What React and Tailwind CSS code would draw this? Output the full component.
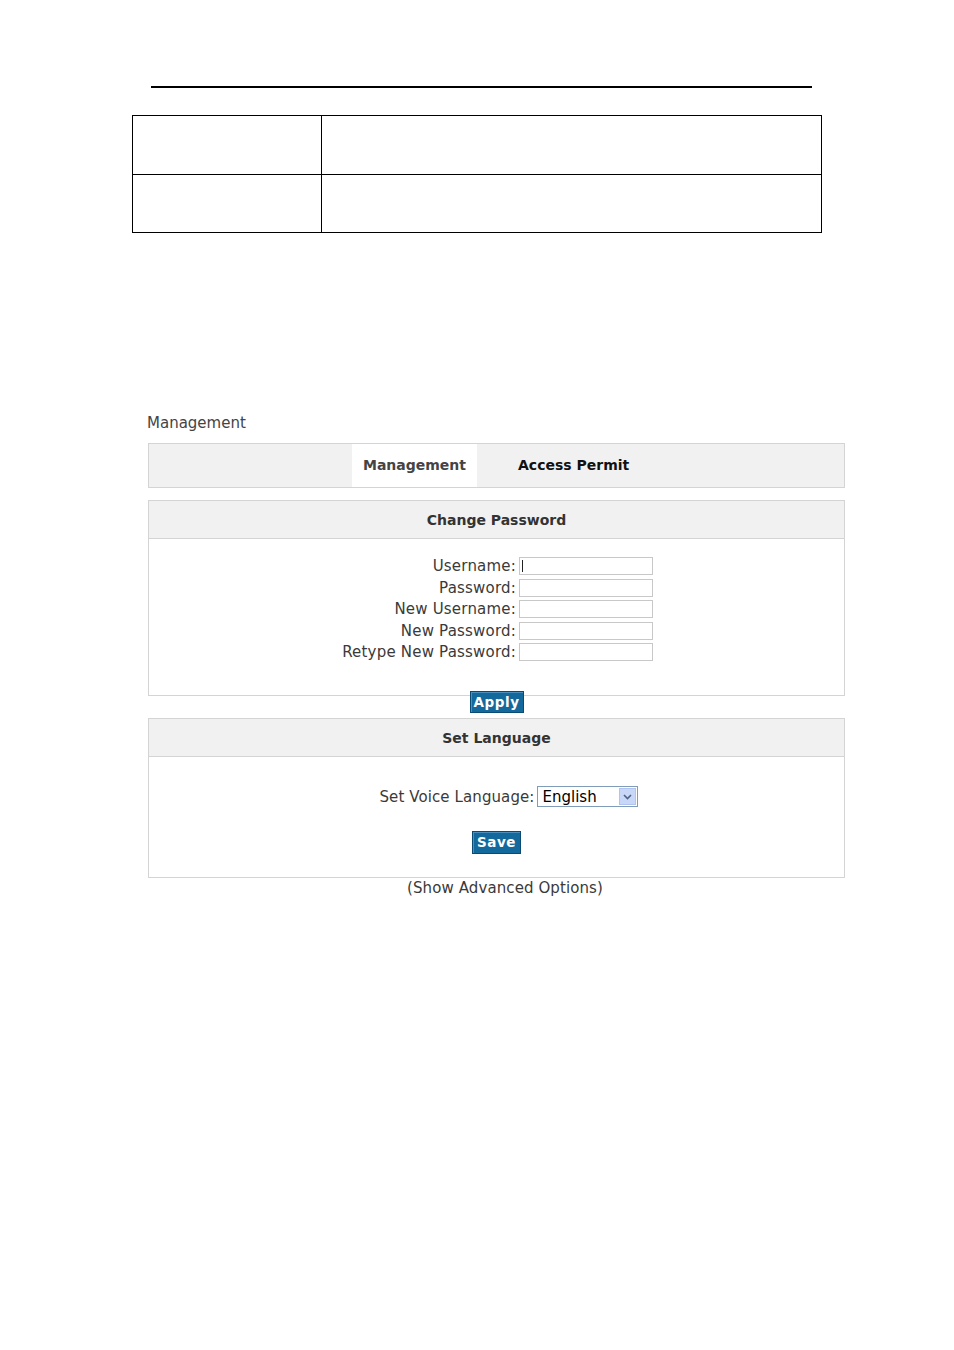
import React from "react";

const font = "font-['DejaVu_Sans',sans-serif]";

function Field({ label, cursor }) {
  return (
    <>
      <div className="text-right text-[15px] leading-[18px] tracking-[0.2px] text-[#3a3a3a] self-center">{label}</div>
      <div className="relative h-[18px] w-[134px] border border-[#c8c8c8] bg-white">
        {cursor && <div className="absolute left-[2px] top-[2px] h-[12px] w-[1px] bg-[#222]" />}
      </div>
    </>
  );
}

function BlueButton({ children, w, h }) {
  return (
    <div
      className={`mx-auto flex items-center justify-center border border-[#0b4a72] bg-[#13689c] text-[13.5px] font-bold tracking-[0.6px] text-white shadow-[inset_1px_1px_0_#4a8fbd] ${w} ${h}`}
    >
      {children}
    </div>
  );
}

export default function App() {
  return (
    <div className={`w-[954px] h-[1350px] bg-white ${font}`}>
      <div className="pt-[86px] pl-[151px]">
        <div className="h-[2px] w-[661px] bg-black" />
      </div>

      <div className="ml-[132px] mt-[27px] w-[690px] border border-black">
        <div className="flex h-[58px]">
          <div className="w-[188px]" />
          <div className="flex-1 border-l border-black" />
        </div>
        <div className="flex h-[58px] border-t border-black">
          <div className="w-[188px]" />
          <div className="flex-1 border-l border-black" />
        </div>
      </div>

      <div className="ml-[147px] mt-[181px] text-[15px] leading-[18px] text-[#444]">Management</div>

      <div className="ml-[148px] w-[697px]">
        <div className="mt-[11px] flex h-[45px] border border-[#d4d4d4] bg-[#f1f1f1] pl-[203px]">
          <div className="flex w-[125px] items-center justify-center bg-white text-[14px] font-bold text-[#444]">
            Management
          </div>
          <div className="ml-[41px] flex items-center text-[14px] font-bold text-[#111]">Access Permit</div>
        </div>

        <div className="mt-[12px] border border-[#d4d4d4]">
          <div className="flex h-[38px] items-center justify-center border-b border-[#d4d4d4] bg-[#f1f1f1] pt-[2px] text-[14px] font-bold text-[#333]">
            Change Password
          </div>
          <div className="h-[156px] bg-white pt-[18px]">
            <div className="grid grid-cols-[367px_134px] gap-x-[3px] gap-y-[3.6px]">
              <Field label="Username:" cursor />
              <Field label="Password:" />
              <Field label="New Username:" />
              <Field label="New Password:" />
              <Field label="Retype New Password:" />
            </div>
          </div>
        </div>

        <div className="relative -mt-[5px]">
          <BlueButton w="w-[54px]" h="h-[22px]">Apply</BlueButton>
        </div>

        <div className="mt-[5px] border border-[#d4d4d4]">
          <div className="flex h-[38px] items-center justify-center border-b border-[#d4d4d4] bg-[#f1f1f1] pt-[2px] text-[14px] font-bold text-[#333]">
            Set Language
          </div>
          <div className="h-[120px] bg-white pt-[29px]">
            <div className="flex items-center justify-center gap-[2px] pl-[24px]">
              <span className="text-[15px] leading-[18px] tracking-[0.1px] text-[#3a3a3a]">Set Voice Language:</span>
              <div className="flex h-[21px] w-[101px] items-center border border-[#7f9db9] bg-white">
                <span className="flex-1 pl-[5px] text-[15px] leading-[18px] text-black">English</span>
                <div className="mr-[1px] flex h-[17px] w-[17px] items-center justify-center border border-[#b0c4ef] bg-[#c8d7f8]">
                  <svg width="9" height="6" viewBox="0 0 9 6">
                    <path d="M1 1 L4.5 4.5 L8 1" fill="none" stroke="#4d6185" strokeWidth="1.6" />
                  </svg>
                </div>
              </div>
            </div>
            <div className="mt-[24px]">
              <BlueButton w="w-[49px]" h="h-[23px]">Save</BlueButton>
            </div>
          </div>
        </div>

        <div className="pl-[17px] pt-[1px] text-center text-[15px] leading-[18px] tracking-[0.1px] text-[#3a3a3a]">(Show Advanced Options)</div>
      </div>
    </div>
  );
}
